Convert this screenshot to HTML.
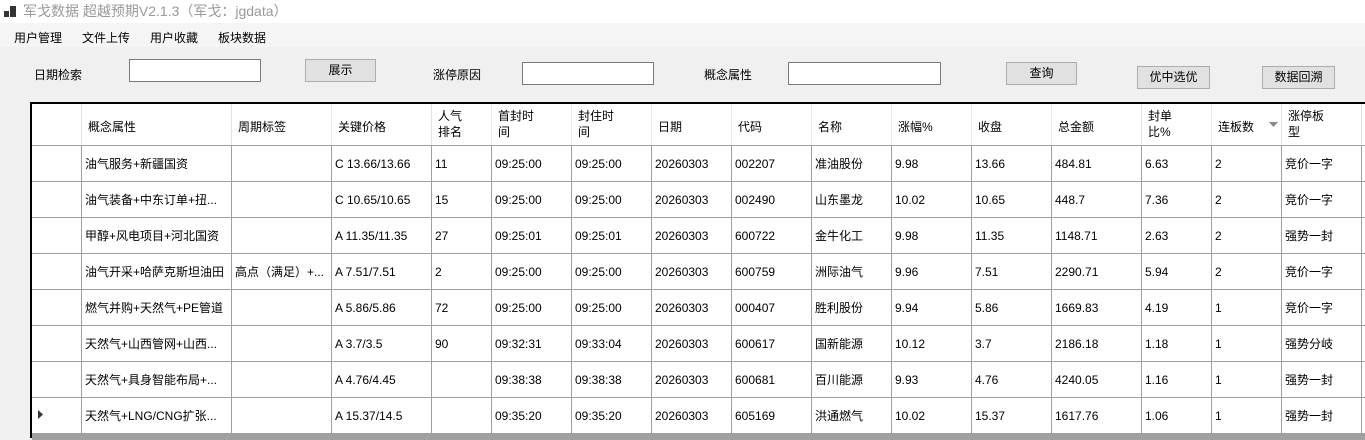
<!DOCTYPE html>
<html><head><meta charset="utf-8"><style>
*{margin:0;padding:0;box-sizing:border-box}
body{width:1365px;height:438px;overflow:hidden;background:#f0f0f0;font-family:"Liberation Sans","Microsoft YaHei","Noto Sans CJK SC",sans-serif;font-size:12px;color:#000;position:relative}
.title{position:absolute;left:0;top:0;width:1365px;height:23px;background:#fff;color:#999;font-size:14px;line-height:23px;padding-left:23px}
.menu{position:absolute;top:23px;left:0;width:1365px;height:24px;background:#f5f5f5}
.menu span{position:absolute;top:6px;font-size:12px}
.a{position:absolute}
.inp{position:absolute;background:#fff;border:1px solid #7a7a7a;height:23px}
.btn{position:absolute;background:#e1e1e1;border:1px solid #adadad;height:23px;text-align:center;line-height:20px}
.grid{position:absolute;left:30px;top:102px;width:1335px;height:336px;background:#fff;border-left:2px solid #000;border-top:2px solid #000}
.v{position:absolute;width:1px;background:#a0a0a0}
.h{position:absolute;height:1px;background:#a0a0a0}
.c{position:absolute;white-space:nowrap;line-height:14px}
</style></head><body>
<div class="title"><svg style="position:absolute;left:4px;top:6px" width="12" height="12"><rect x="0" y="5" width="5" height="6" fill="#333"/><rect x="6" y="0" width="6" height="11" fill="#333"/></svg>军戈数据 超越预期V2.1.3（军戈：jgdata）</div>
<div class="menu"><span style="left:14px">用户管理</span><span style="left:82px">文件上传</span><span style="left:150px">用户收藏</span><span style="left:218px">板块数据</span></div>
<div class="a" style="left:34px;top:66px">日期检索</div>
<div class="inp" style="left:129px;top:59px;width:132px"></div>
<div class="btn" style="left:305px;top:59px;width:71px">展示</div>
<div class="a" style="left:433px;top:66px">涨停原因</div>
<div class="inp" style="left:522px;top:62px;width:132px"></div>
<div class="a" style="left:704px;top:66px">概念属性</div>
<div class="inp" style="left:788px;top:62px;width:153px"></div>
<div class="btn" style="left:1006px;top:62px;width:71px">查询</div>
<div class="btn" style="left:1137px;top:66px;width:73px">优中选优</div>
<div class="btn" style="left:1262px;top:66px;width:73px">数据回溯</div>
<div class="grid" id="g"></div>
<script>
var g=document.getElementById('g');
var xs=[0,49,199,299,399,459,539,619,699,779,859,939,1019,1109,1179,1249,1329];
var hd=['','概念属性','周期标签','关键价格','人气<br>排名','首封时<br>间','封住时<br>间','日期','代码','名称','涨幅%','收盘','总金额','封单<br>比%','连板数','涨停板<br>型'];
var rows=[
['油气服务+新疆国资','','C 13.66/13.66','11','09:25:00','09:25:00','20260303','002207','准油股份','9.98','13.66','484.81','6.63','2','竞价一字'],
['油气装备+中东订单+扭...','','C 10.65/10.65','15','09:25:00','09:25:00','20260303','002490','山东墨龙','10.02','10.65','448.7','7.36','2','竞价一字'],
['甲醇+风电项目+河北国资','','A 11.35/11.35','27','09:25:01','09:25:01','20260303','600722','金牛化工','9.98','11.35','1148.71','2.63','2','强势一封'],
['油气开采+哈萨克斯坦油田','高点（满足）+...','A 7.51/7.51','2','09:25:00','09:25:00','20260303','600759','洲际油气','9.96','7.51','2290.71','5.94','2','竞价一字'],
['燃气并购+天然气+PE管道','','A 5.86/5.86','72','09:25:00','09:25:00','20260303','000407','胜利股份','9.94','5.86','1669.83','4.19','1','竞价一字'],
['天然气+山西管网+山西...','','A 3.7/3.5','90','09:32:31','09:33:04','20260303','600617','国新能源','10.12','3.7','2186.18','1.18','1','强势分岐'],
['天然气+具身智能布局+...','','A 4.76/4.45','','09:38:38','09:38:38','20260303','600681','百川能源','9.93','4.76','4240.05','1.16','1','强势一封'],
['天然气+LNG/CNG扩张...','','A 15.37/14.5','','09:35:20','09:35:20','20260303','605169','洪通燃气','10.02','15.37','1617.76','1.06','1','强势一封']];
var s='';
for(var i=1;i<xs.length;i++){s+='<div class="v" style="left:'+xs[i]+'px;top:0;height:42px;background:#e3e3e3"></div><div class="v" style="left:'+xs[i]+'px;top:42px;height:290px"></div>';}
for(var r=0;r<=8;r++){s+='<div class="h" style="left:0;width:1335px;top:'+(42+r*36-1)+'px"></div>';}
for(var i=1;i<hd.length;i++){var two=hd[i].indexOf('<br>')>0;s+='<div class="c" style="left:'+(xs[i]+7)+'px;top:'+(two?4:15)+'px;line-height:16px">'+hd[i]+'</div>';}
s+='<svg style="position:absolute;left:1237px;top:18px" width="9" height="5"><path d="M0 0H9L4.5 5z" fill="#888"/></svg>';
for(var r=0;r<rows.length;r++){for(var j=0;j<rows[r].length;j++){s+='<div class="c" style="left:'+(xs[j+1]+4)+'px;top:'+(42+r*36+11)+'px">'+rows[r][j]+'</div>';}}
s+='<svg style="position:absolute;left:6px;top:306px" width="5" height="9"><path d="M0 0L5 4.5L0 9z" fill="#333"/></svg>';
s+='<div style="position:absolute;left:0;top:330px;width:1335px;height:6px;background:#a0a0a0"></div>';
g.innerHTML=s;
</script>
</body></html>
